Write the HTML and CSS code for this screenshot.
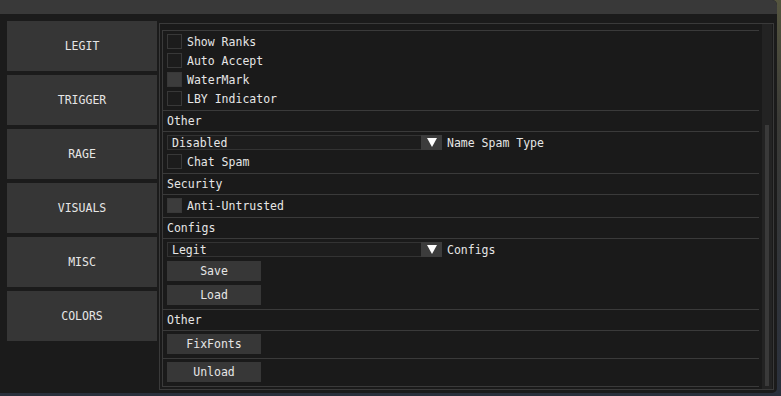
FILE: index.html
```html
<!DOCTYPE html>
<html lang="en">
<head>
    <meta charset="UTF-8">
    <meta name="viewport" content="width=device-width, initial-scale=1.0">
    <title>Misc</title>
    <link rel="stylesheet" href="styles.css">
</head>
<body>
    <div class="window">
        <div class="titlebar"></div>
        <div class="main">
            <div class="nav">
                <div class="tab">LEGIT</div>
                <div class="tab">TRIGGER</div>
                <div class="tab">RAGE</div>
                <div class="tab">VISUALS</div>
                <div class="tab">MISC</div>
                <div class="tab">COLORS</div>
            </div>

            <div class="frame">
                <div class="list">
                    <div class="section">
                        <label class="check"><span class="box"></span>Show Ranks</label>
                        <label class="check"><span class="box"></span>Auto Accept</label>
                        <label class="check"><span class="box on"></span>WaterMark</label>
                        <label class="check"><span class="box"></span>LBY Indicator</label>
                    </div>
                    <div class="section">
                        <div class="heading">Other</div>
                    </div>
                    <div class="section">
                        <div class="combo-row">
                            <div class="combo">
                                <span class="combo-value">Disabled</span>
                                <span class="combo-arrow"></span>
                            </div>
                            <span>Name Spam Type</span>
                        </div>
                        <label class="check"><span class="box"></span>Chat Spam</label>
                    </div>
                    <div class="section">
                        <div class="heading">Security</div>
                    </div>
                    <div class="section">
                        <label class="check"><span class="box on"></span>Anti-Untrusted</label>
                    </div>
                    <div class="section">
                        <div class="heading">Configs</div>
                    </div>
                    <div class="section">
                        <div class="combo-row">
                            <div class="combo">
                                <span class="combo-value">Legit</span>
                                <span class="combo-arrow"></span>
                            </div>
                            <span>Configs</span>
                        </div>
                        <div class="btn">Save</div>
                        <div class="btn">Load</div>
                    </div>
                    <div class="section">
                        <div class="heading">Other</div>
                    </div>
                    <div class="section">
                        <div class="btn">FixFonts</div>
                    </div>
                    <div class="section">
                        <div class="btn">Unload</div>
                    </div>
                </div>
                <div class="scrollbar">
                    <div class="grab"></div>
                </div>
            </div>
        </div>
    </div>
</body>
</html>
```

FILE: styles.css
```css
body {
    margin: 0;
    height: 396px;
    overflow: hidden;
    background: linear-gradient(#55553f, #3a3a36 30%, #2a303c);
    font-family: "DejaVu Sans Mono", "Liberation Mono", monospace;
    font-size: 11.5px;
    color: #e6e6e6;
}
.window {
    width: 777px;
    height: 393px;
    background: #1b1b1b;
    border-radius: 0 5px 5px 0;
    overflow: hidden;
}
.titlebar {
    height: 14px;
    background: #393939;
}
.main {
    display: flex;
    padding: 7px 0 0 7px;
}
.nav {
    width: 150px;
    display: flex;
    flex-direction: column;
    gap: 4px;
    margin-right: 2px;
}
.tab {
    height: 50px;
    background: #363636;
    display: flex;
    align-items: center;
    justify-content: center;
}
.frame {
    width: 611px;
    height: 365px;
    margin-top: 2px;
    padding-left: 2px;
    border: 1px solid #3a3a3a;
    background: #1a1a1a;
    display: flex;
}
.list {
    width: 597px;
    height: 357px;
    margin-top: 6px;
    box-sizing: border-box;
    border-left: 1px solid #3a3a3a;
    border-top: 1px solid #3a3a3a;
}
.section {
    display: flex;
    flex-direction: column;
    gap: 4px;
    padding: 3px 0 4px 4px;
    border-bottom: 1px solid #3a3a3a;
}
.heading {
    height: 13px;
    line-height: 15px;
}
.check {
    display: flex;
    align-items: center;
    gap: 5px;
    height: 15px;
}
.box {
    width: 15px;
    height: 15px;
    box-sizing: border-box;
    border: 1px solid #383838;
    background: #1c1c1c;
}
.box.on {
    background: #3c3c3c;
}
.combo-row {
    display: flex;
    align-items: center;
    gap: 5px;
    height: 15px;
}
.combo {
    width: 275px;
    height: 15px;
    box-sizing: border-box;
    border: 1px solid #333;
    background: #1d1d1d;
    display: flex;
    align-items: center;
}
.combo-value {
    flex: 1;
    padding-left: 4px;
}
.combo-arrow {
    width: 21px;
    height: 15px;
    margin-right: -1px;
    background: #3c3c3c;
    position: relative;
}
.combo-arrow::after {
    content: "";
    position: absolute;
    left: 6px;
    top: 3px;
    border-left: 5px solid transparent;
    border-right: 5px solid transparent;
    border-top: 9px solid #fff;
}
.btn {
    width: 94px;
    height: 20px;
    background: #373737;
    display: flex;
    align-items: center;
    justify-content: center;
}
.scrollbar {
    width: 10px;
    margin-left: 3px;
    background: #232323;
}
.grab {
    width: 4px;
    height: 261px;
    margin: 101px 0 0 3px;
    background: #3a3a3a;
}
```
